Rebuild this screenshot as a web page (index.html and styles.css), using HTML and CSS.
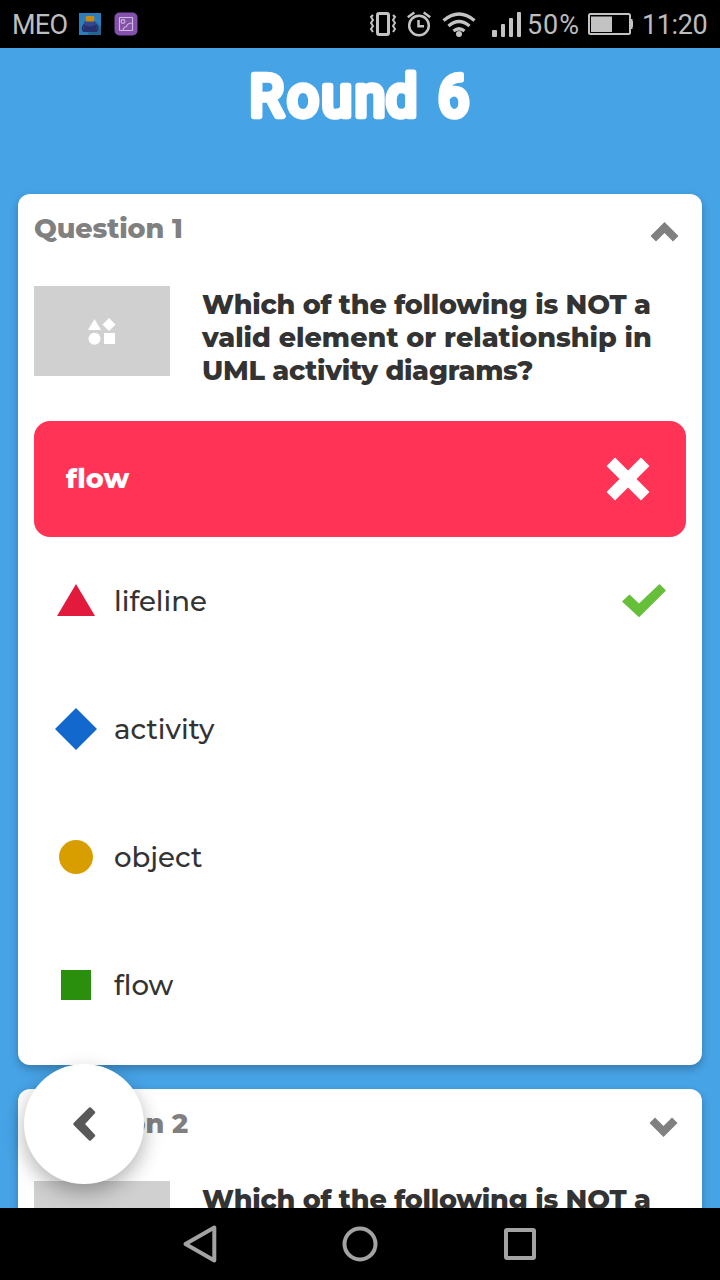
FILE: index.html
```html
<!DOCTYPE html>
<html lang="en">
<head>
<meta charset="utf-8">
<title>Round 6</title>
<link rel="stylesheet" href="styles.css">
</head>
<body>
<div class="screen">
  <header class="status">
    <span class="carrier">MEO</span>
    <svg class="app-icon" width="22" height="22" viewBox="0 0 22 22"><path fill="#2b7dbd" d="M0 0h22v22H0z"/><path fill="#236594" d="M17 9l5 5v8H8z"/><path d="M5.500 11c-2.500 3-2.500 6-1 7.500M16.500 11c2.500 3 2.500 6 1 7.500" fill="none" stroke="#26306f" stroke-width="1.300"/><path fill="#25306f" d="M6 8.500h10c1 3 2 7 2 10.500H4c0-3.500 1-7.500 2-10.500z"/><path fill="#35468d" d="M6 8.500h10l1 3c-3 2.500-9 2.500-12 0z"/><rect x="6.800" y="3" width="8.500" height="5.500" rx="1" fill="#c88a10"/></svg>
    <svg class="app-icon photo" width="24" height="24" viewBox="0 0 24 24"><rect x=".5" y=".5" width="23" height="23" rx="5" fill="#8651ae"/><g fill="none" stroke="#cdbbd9" stroke-width="1.100"><rect x="5.500" y="5.500" width="13" height="13" rx=".5"/><circle cx="9" cy="9.500" r="1.900"/><path d="M9 18.500c0-3 1.500-3.500 3.500-4 .5-2.500 2.500-3.500 6-3.500"/></g></svg>
    <span class="spacer"></span>
    <svg class="sys-icons" width="156" height="32" viewBox="368 8 156 32" fill="none" stroke="#c3c3c3"><rect x="377.500" y="13.500" width="11" height="21" rx="1.500" stroke-width="3"/><path stroke-width="2" d="M373 15l-2 2 2 3-2 3 2 3-2 3 2 3M393 15l2 2-2 3 2 3-2 3 2 3-2 3"/><circle cx="419" cy="25.500" r="9.800" stroke-width="2.500"/><path stroke-width="2.500" d="M418.500 20v6.200h5.500M407.800 17.200l6.500-4.800M430.200 17.200l-6.500-4.800"/><path stroke-width="3.200" d="M443.500 20.500q15.500-13 31 0M448.500 26q10.500-9 21 0M453.500 31q5.500-4.500 11 0"/><circle cx="459" cy="34" r="3" fill="#c3c3c3" stroke="none"/><g fill="#c3c3c3" stroke="none"><rect x="492" y="30" width="5" height="7" rx="1"/><rect x="501" y="24" width="4" height="13" rx="1"/><rect x="509" y="18" width="4" height="19" rx="1"/><rect x="517" y="12" width="4" height="25" rx="1"/></g></svg>
    <span class="percent">50%</span>
    <svg class="battery" width="46" height="24" viewBox="0 0 46 24"><rect x="1" y="2" width="41" height="20" rx="1.500" fill="none" stroke="#c3c3c3" stroke-width="2"/><path fill="#c3c3c3" d="M3 4.500h21v15.500H3zM43 7h1.500v2H45v6h-.5v2H43z"/></svg>
    <span class="clock">11:20</span>
  </header>

  <main class="content">
    <h1 class="title"><svg width="260" height="90" viewBox="230 50 260 90"><text class="title-text" transform="scale(.97 1)" x="257.200 296.200 331.400 365.800 398 430 451.500" y="116">Round 6</text></svg></h1>

    <section class="card">
      <div class="card-head">
        <h2 class="label">Question 1</h2>
        <svg class="chevron" width="30" height="20" viewBox="0 0 30 20"><path d="M15.500 0l14 14-5.500 5.500-8.500-8.500L7 19.500 1.500 14z"/></svg>
      </div>
      <div class="question">
        <div class="thumb"><svg width="28" height="28" viewBox="0 0 28 28"><path d="M6.500 1L13 12H0zM21 0l6.500 6.500L21 13l-6.500-6.500zM16 15h11v11H16z"/><circle cx="6.500" cy="20.700" r="6"/></svg></div>
        <p class="prompt"><span class="l1">Which of the following is NOT a</span><br><span class="l2">valid element or relationship in</span><br><span class="l3">UML activity diagrams?</span></p>
      </div>
      <div class="chosen">
        <span class="chosen-text">flow</span>
        <svg width="44" height="44" viewBox="0 0 44 44"><path d="M9 .5l13 13 13-13L43.500 9l-13 13 13 13-8.500 8.500-13-13-13 13L.5 35l13-13L.5 9z"/></svg>
      </div>
      <ul class="answers">
        <li class="answer"><svg class="shape" width="42" height="42" viewBox="0 0 42 42"><path fill="#e21b3c" d="M21 4l19 32H2z"/></svg><span>lifeline</span><svg class="tick" width="44" height="34" viewBox="0 0 44 34"><path d="M7.500 10.500L17 19.500 37.500 0 44 6.500 17 33.300 0 17.500z"/></svg></li>
        <li class="answer"><svg class="shape" width="42" height="42" viewBox="0 0 42 42"><path fill="#1368ce" d="M21 0l21 21-21 21L0 21z"/></svg><span>activity</span></li>
        <li class="answer"><svg class="shape" width="42" height="42" viewBox="0 0 42 42"><circle fill="#d89e00" cx="21" cy="21" r="17"/></svg><span>object</span></li>
        <li class="answer"><svg class="shape" width="42" height="42" viewBox="0 0 42 42"><path fill="#298f0d" d="M6 6h30v30H6z"/></svg><span>flow</span></li>
      </ul>
    </section>

    <section class="card">
      <div class="card-head">
        <h2 class="label">Question 2</h2>
        <svg class="chevron down" width="30" height="20" viewBox="0 0 30 20"><path d="M15.500 20l-14-14L7 .5 15.500 9 24 .5 29.500 6z"/></svg>
      </div>
      <div class="question">
        <div class="thumb"></div>
        <p class="prompt"><span class="l1">Which of the following is NOT a</span></p>
      </div>
    </section>
    <button class="back" aria-label="Back"><svg width="24" height="36" viewBox="0 0 24 36"><path d="M18 2.500L22 6.500 11.500 18 22 29.500l-4 4L2.500 18z" fill="#595959" stroke="#595959" stroke-width="2.500" stroke-linejoin="round"/></svg></button>
  </main>

  <nav class="navbar">
    <svg width="36" height="40" viewBox="0 0 36 40"><path d="M32.300 3.500v33L3.500 20z"/></svg>
    <svg width="36" height="40" viewBox="0 0 36 40"><circle cx="18" cy="20" r="15.500"/></svg>
    <svg width="36" height="40" viewBox="0 0 36 40"><rect x="4" y="6" width="28" height="28" rx="1"/></svg>
  </nav>
</div>
</body>
</html>
```
FILE: styles.css
```css
* { box-sizing: border-box; }
body { margin: 0; background: #000; }
h1, h2, p, ul { margin: 0; padding: 0; }
svg { display: block; flex: none; }

.screen {
  width: 720px;
  height: 1280px;
  display: flex;
  flex-direction: column;
  overflow: hidden;
  font-family: Montserrat, Inter, sans-serif;
}

.status {
  height: 48px;
  flex: none;
  display: flex;
  align-items: center;
  padding: 2px 12px 0;
  background: #000;
  color: #bdbdbd;
  font: 27px/46px Roboto, sans-serif;
}
.carrier { width: 67px; letter-spacing: -0.7px; }
.app-icon { margin-top: -2px; }
.app-icon.photo { margin-left: 13px; }
.spacer { flex: 1; }
.sys-icons { margin-top: -2px; }
.percent { margin-left: 3px; width: 61px; letter-spacing: .9px; }
.battery { margin-top: -2px; }
.clock { width: 66px; margin-left: 8px; text-align: left; white-space: nowrap; letter-spacing: -.4px; }

.content {
  flex: 1;
  min-height: 0;
  overflow: hidden;
  position: relative;
  background: #46a3e6;
  padding: 0 18px;
}
.title { height: 146px; padding: 2px 0 0 212px; }
.title-text {
  font: 400 57px Roboto, sans-serif;
  fill: #fff;
  stroke: #fff;
  stroke-width: 6.5px;
  stroke-linejoin: round;
}

.card {
  background: #fff;
  border-radius: 12px;
  padding: 0 16px 16px;
  margin-bottom: 24px;
  box-shadow: 0 4px 8px rgba(0, 0, 0, .25);
}
.card-head {
  height: 92px;
  display: flex;
  justify-content: space-between;
  padding: 18px 7px 0 0;
}
.label {
  font-size: 27px;
  line-height: 33px;
  font-weight: 800;
  letter-spacing: -.1px;
  color: #808080;
}
.chevron { margin-top: 10px; fill: #808080; }
.chevron.down { margin: 10px 1px 0 0; }

.question { display: flex; gap: 32px; height: 135px; }
.thumb {
  width: 136px;
  height: 90px;
  flex: none;
  background: #d0d0d0;
  display: flex;
  align-items: center;
  justify-content: center;
}
.thumb svg { fill: #fff; margin-top: 2px; }
.prompt {
  padding-top: 2px;
  font-size: 27px;
  line-height: 33px;
  font-weight: 800;
  color: #333;
  white-space: nowrap;
}
.l1 { letter-spacing: -.23px; }
.l3 { letter-spacing: -.28px; }

.chosen {
  height: 116px;
  border-radius: 16px;
  background: #ff3355;
  color: #fff;
  display: flex;
  align-items: center;
  justify-content: space-between;
  padding: 0 36px 0 32px;
  font-size: 27px;
  font-weight: 800;
}
.chosen-text { margin-top: -2px; letter-spacing: .2px; }
.chosen svg { fill: #fff; }

.answers { list-style: none; }
.answer {
  height: 128px;
  display: flex;
  align-items: center;
  gap: 17px;
  padding: 0 20px 0 21px;
  font-size: 27.6px;
  font-weight: 500;
  color: #333;
}
.tick { margin-left: auto; margin-top: -1px; fill: #66bf39; }

.back {
  position: absolute;
  left: 24px;
  top: 1016px;
  width: 120px;
  height: 120px;
  border: 0;
  border-radius: 50%;
  background: #fff;
  display: flex;
  align-items: center;
  justify-content: center;
  box-shadow: 0 8px 20px rgba(0, 0, 0, .3);
}

.navbar {
  height: 72px;
  flex: none;
  background: #000;
  display: flex;
  justify-content: center;
  align-items: center;
  gap: 124px;
}
.navbar svg {
  fill: none;
  stroke: #a3a3a3;
  stroke-width: 4;
  stroke-linejoin: round;
}
```
